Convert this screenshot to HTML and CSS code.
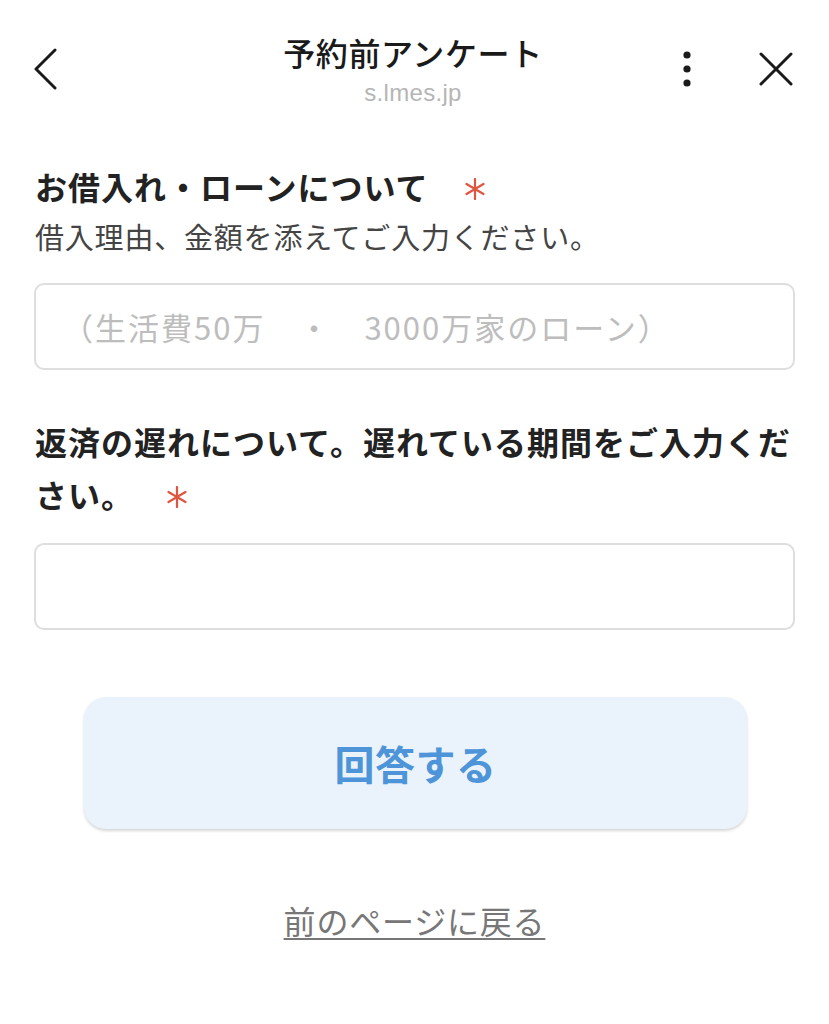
FILE: index.html
```html
<!DOCTYPE html>
<html lang="ja">
<head>
<meta charset="utf-8">
<title>予約前アンケート</title>
<link rel="stylesheet" href="styles.css">
</head>
<body>
<header class="topbar">
  <div class="topbar-left">
    <svg class="icon-back" width="26" height="42" viewBox="0 0 26 42" aria-hidden="true">
      <path d="M23 2 L4 21 L23 40" fill="none" stroke="#1a1a1a" stroke-width="3" stroke-linecap="round" stroke-linejoin="round"/>
    </svg>
  </div>
  <div class="topbar-center">
    <div class="topbar-title">予約前アンケート</div>
    <div class="topbar-url">s.lmes.jp</div>
  </div>
  <div class="topbar-right">
    <svg class="icon-more" width="12" height="36" viewBox="0 0 12 36" aria-hidden="true">
      <circle cx="6" cy="4" r="3.6" fill="#1a1a1a"/>
      <circle cx="6" cy="18" r="3.6" fill="#1a1a1a"/>
      <circle cx="6" cy="32" r="3.6" fill="#1a1a1a"/>
    </svg>
    <svg class="icon-close" width="36" height="36" viewBox="0 0 36 36" aria-hidden="true">
      <path d="M3 3 L33 33 M33 3 L3 33" fill="none" stroke="#1a1a1a" stroke-width="3" stroke-linecap="round"/>
    </svg>
  </div>
</header>

<main class="form">
  <section class="field">
    <div class="field-label">お借入れ・ローンについて<svg class="req req-first" width="20" height="22" viewBox="0 0 20 22" aria-hidden="true"><path d="M10 1 V21 M1.5 6 L18.5 16 M1.5 16 L18.5 6" fill="none" stroke="#e0553f" stroke-width="2.2" stroke-linecap="round"/></svg></div>
    <div class="field-help">借入理由、金額を添えてご入力ください。</div>
    <input class="field-input field-input-first" type="text" placeholder="（生活費50万　・　3000万家のローン）">
  </section>

  <section class="field field-second">
    <div class="field-label">返済の遅れについて。遅れている期間をご入力ください。<svg class="req" width="20" height="22" viewBox="0 0 20 22" aria-hidden="true"><path d="M10 1 V21 M1.5 6 L18.5 16 M1.5 16 L18.5 6" fill="none" stroke="#e0553f" stroke-width="2.2" stroke-linecap="round"/></svg></div>
    <input class="field-input" type="text">
  </section>

  <div class="actions">
    <button class="submit" type="button">回答する</button>
    <a class="back-link" href="#">前のページに戻る</a>
  </div>
</main>
</body>
</html>
```

FILE: styles.css
```css
* {
  box-sizing: border-box;
}

html, body {
  margin: 0;
  padding: 0;
  background: #ffffff;
}

body {
  font-family: "Noto Sans CJK JP", "Noto Sans", sans-serif;
  color: #222222;
}

.topbar {
  display: grid;
  grid-template-columns: 1fr auto 1fr;
  align-items: center;
  padding: 30px 35px 0 32px;
}

.topbar-left {
  display: flex;
  align-items: center;
}

.icon-back {
  display: block;
}

.topbar-center {
  display: flex;
  flex-direction: column;
  align-items: center;
  gap: 4px;
}

.topbar-title {
  font-size: 32px;
  line-height: 44px;
  font-weight: 500;
  letter-spacing: 0.6px;
  color: #1a1a1a;
}

.topbar-url {
  font-family: "Liberation Sans", "Noto Sans", sans-serif;
  font-size: 24px;
  line-height: 30px;
  color: #b5b5b5;
  letter-spacing: 0.3px;
}

.topbar-right {
  display: flex;
  align-items: center;
  justify-content: flex-end;
  gap: 65px;
}

.icon-more,
.icon-close {
  display: block;
}

.form {
  padding: 52px 34px 0 34px;
}

.field {
  display: flex;
  flex-direction: column;
}

.field-second {
  margin-top: 45px;
}

.field-label {
  font-size: 32px;
  line-height: 53px;
  font-weight: 700;
  letter-spacing: 1px;
  color: #222222;
  padding-left: 1px;
}

.req {
  display: inline-block;
  vertical-align: middle;
  margin-left: 33px;
  margin-top: -4px;
}

.req-first {
  margin-left: 37px;
}

.field-help {
  margin-top: 3px;
  font-size: 29px;
  line-height: 40px;
  letter-spacing: 0.8px;
  color: #444444;
  padding-left: 1px;
}

.field-input {
  display: block;
  width: 100%;
  height: 87px;
  margin-top: 22px;
  border: 2px solid #dedede;
  border-radius: 10px;
  padding: 0 20px 0 26px;
  font-family: "Noto Sans CJK JP", "Noto Sans", sans-serif;
  font-size: 31px;
  letter-spacing: 2px;
  color: #222222;
  background: #ffffff;
  outline: none;
}

.field-input-first {
  margin-top: 27px;
}

.field-input::placeholder {
  color: #bdbdbd;
}

.actions {
  display: flex;
  flex-direction: column;
  align-items: center;
  margin-top: 67px;
}

.submit {
  width: 663px;
  height: 132px;
  border: none;
  border-radius: 22px;
  background: #eaf3fb;
  box-shadow: 0 2px 3px rgba(0, 0, 0, 0.16);
  color: #4d94d8;
  font-family: "Noto Sans CJK JP", "Noto Sans", sans-serif;
  font-size: 40px;
  font-weight: 700;
  letter-spacing: 0.5px;
  margin-left: 2px;
}

.back-link {
  margin-top: 69px;
  font-size: 32px;
  line-height: 44px;
  color: #777777;
  text-decoration: underline;
  text-decoration-thickness: 2px;
  text-underline-offset: 4px;
  letter-spacing: 0.8px;
}
```
